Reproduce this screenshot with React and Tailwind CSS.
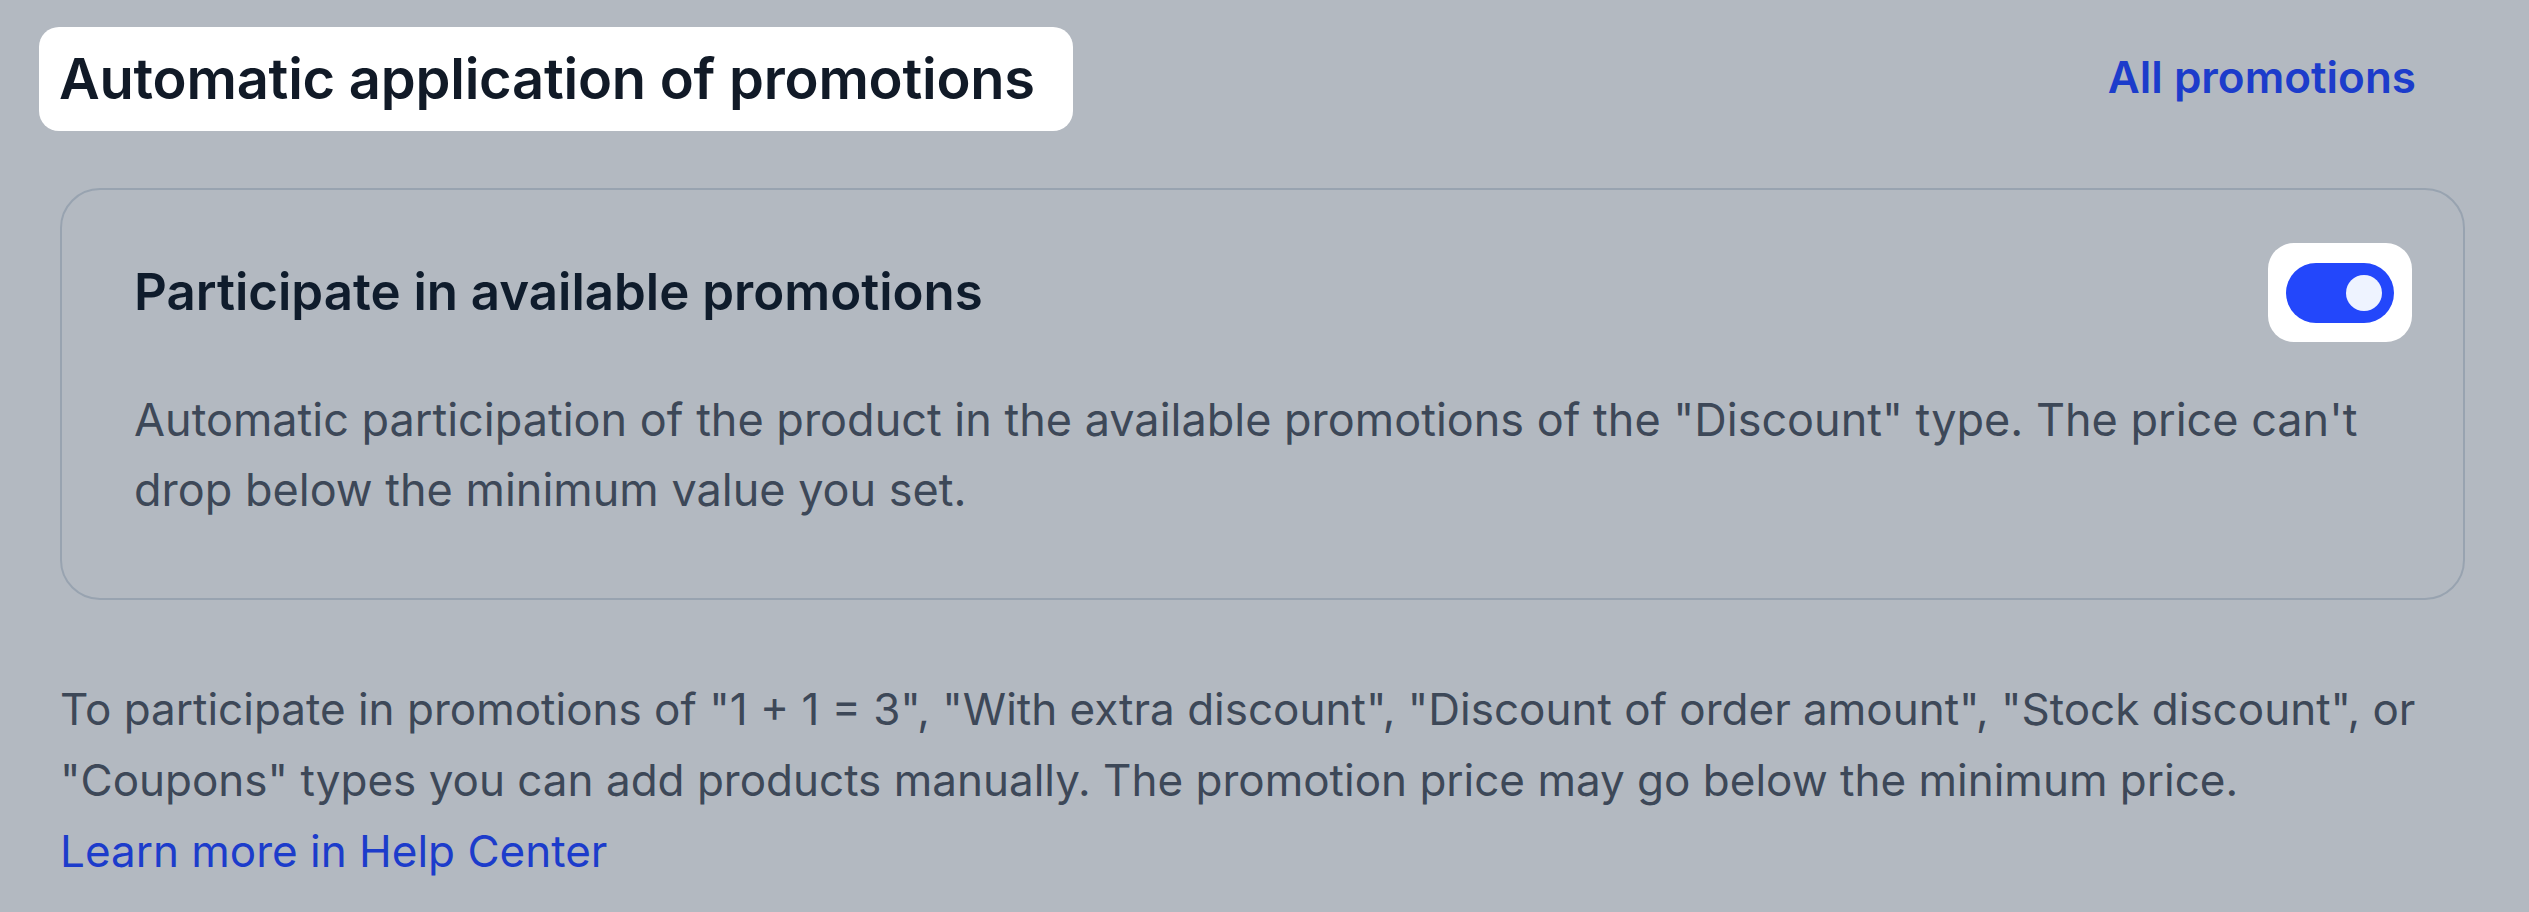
import React from "react";

const Toggle = ({ checked }) => {
  return (
    <div className="flex h-[99px] w-[144px] shrink-0 items-center justify-center rounded-[26px] bg-white">
      <div
        className={
          checked
            ? "flex h-[60px] w-[108px] items-center justify-end rounded-full bg-[#2347fb] pr-[12px]"
            : "flex h-[60px] w-[108px] items-center justify-start rounded-full bg-[#c7ccd3] pl-[12px]"
        }
      >
        <div className="h-[36px] w-[36px] rounded-full bg-[#eef3ff]" />
      </div>
    </div>
  );
};

const App = () => {
  return (
    <div className="min-h-screen bg-[#b3b9c1] pl-[60px] pr-[64px] pt-[27px] font-['Inter',_'Noto_Sans',_sans-serif] text-[#3d4858]">
      {/* Header */}
      <div className="flex items-center justify-between">
        <h1 className="-ml-[21px] flex h-[104px] items-center rounded-[20px] bg-white pl-[20px] pr-[38px] text-[56px] font-semibold tracking-[-0.004em] text-[#111a27]">
          Automatic application of promotions
        </h1>
        <a href="#" className="mr-[49px] -mt-[4px] text-[44px] font-semibold text-[#1c3ccb]">
          All promotions
        </a>
      </div>

      {/* Card */}
      <div className="mt-[57px] rounded-[40px] border-2 border-[#98a3b0] pb-[73px] pl-[72px] pr-[51px] pt-[53px]">
        <div className="flex items-center justify-between">
          <h2 className="text-[51px] font-semibold text-[#0f1c2c]">Participate in available promotions</h2>
          <Toggle checked />
        </div>
        <p className="mt-[43px] max-w-[2250px] text-[45px] leading-[70px]">
          Automatic participation of the product in the available promotions of the "Discount" type. The price can't
          drop below the minimum value you set.
        </p>
      </div>

      {/* Footer note */}
      <p className="mt-[74px] text-[44px] leading-[71px]">
        To participate in promotions of "1 + 1 = 3", "With extra discount", "Discount of order amount", "Stock
        discount", or "Coupons" types you can add products manually. The promotion price may go below the minimum
        price.
        <br />
        <a href="#" className="text-[#1c3ccb]">
          Learn more in Help Center
        </a>
      </p>
    </div>
  );
};

export default App;
